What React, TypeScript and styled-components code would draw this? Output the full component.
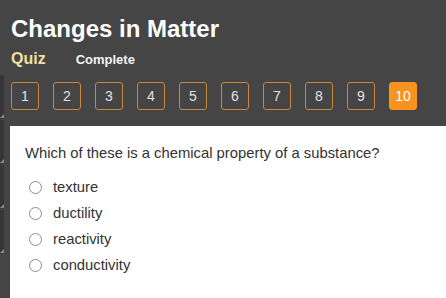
import React, { useState } from 'react';
import styled, { createGlobalStyle, css } from 'styled-components';

const GlobalStyle = createGlobalStyle`
  html, body {
    margin: 0;
    padding: 0;
    background: #454545;
    font-family: 'Liberation Sans', Arial, sans-serif;
  }
`;

const Page = styled.div`
  width: 446px;
  height: 298px;
  overflow: hidden;
  background: #454545;
  display: flex;
  flex-direction: column;
`;

const Header = styled.div`
  padding: 16px 0 0 11px;
`;

const Title = styled.h1`
  margin: 0;
  font-size: 24px;
  line-height: 26px;
  font-weight: bold;
  color: #ffffff;
`;

const SubRow = styled.div`
  display: flex;
  align-items: baseline;
  gap: 30px;
  margin-top: 8px;
`;

const Kind = styled.span`
  font-size: 16px;
  font-weight: bold;
  color: #f1dea5;
`;

const Status = styled.span`
  font-size: 13px;
  font-weight: bold;
  color: #f4f4f4;
`;

const Body = styled.div`
  flex: 1;
  display: flex;
  margin-top: 7px;
`;

const Rail = styled.div`
  width: 10px;
  flex-shrink: 0;
  display: flex;
  flex-direction: column;
  gap: 1px;
`;

const RailSegment = styled.div`
  position: relative;
  width: 4px;
  height: 44px;
  background: #363636;

  &::after {
    content: '';
    position: absolute;
    right: 0;
    bottom: 1px;
    border-left: 4px solid transparent;
    border-bottom: 4px solid #8a8a8a;
  }
`;

const Content = styled.div`
  flex: 1;
  display: flex;
  flex-direction: column;
`;

const Nav = styled.div`
  display: flex;
  gap: 14px;
  padding: 7px 0 16px 1px;
`;

const NumButton = styled.button<{ active?: boolean }>`
  width: 28px;
  height: 28px;
  box-sizing: border-box;
  padding: 0;
  border: 1px solid #c9883c;
  border-radius: 3px;
  background: transparent;
  color: #e2e2e2;
  font-family: 'Liberation Sans', Arial, sans-serif;
  font-size: 14px;
  cursor: pointer;

  ${props =>
    props.active &&
    css`
      background: #f7931e;
      border-color: #f7931e;
      color: #ffffff;
    `}
`;

const Panel = styled.div`
  flex: 1;
  background: #ffffff;
  padding: 18px 15px 0 15px;
`;

const Question = styled.p`
  margin: 0 0 12px 0;
  font-size: 14.8px;
  line-height: 18px;
  color: #333333;
`;

const Options = styled.div`
  display: flex;
  flex-direction: column;
`;

const Option = styled.label`
  display: flex;
  align-items: center;
  height: 26px;
  padding-left: 4px;
  font-size: 14.8px;
  color: #333333;
  cursor: pointer;
`;

const RadioCircle = styled.span<{ checked?: boolean }>`
  width: 13px;
  height: 13px;
  box-sizing: border-box;
  border: 1px solid #8c8c8c;
  border-radius: 50%;
  background: #ffffff;
  margin-right: 11px;
  flex-shrink: 0;

  ${props =>
    props.checked &&
    css`
      border: 4px solid #f7931e;
    `}
`;

const options = ['texture', 'ductility', 'reactivity', 'conductivity'];

const App: React.FC = () => {
  const [current, setCurrent] = useState(10);
  const [picked, setPicked] = useState<string | null>(null);

  return (
    <Page>
      <GlobalStyle />
      <Header>
        <Title>Changes in Matter</Title>
        <SubRow>
          <Kind>Quiz</Kind>
          <Status>Complete</Status>
        </SubRow>
      </Header>
      <Body>
        <Rail>
          {[0, 1, 2, 3].map(i => (
            <RailSegment key={i} />
          ))}
        </Rail>
        <Content>
          <Nav>
            {Array.from({ length: 10 }, (_, i) => i + 1).map(n => (
              <NumButton
                key={n}
                active={n === current}
                onClick={() => setCurrent(n)}
              >
                {n}
              </NumButton>
            ))}
          </Nav>
          <Panel>
            <Question>Which of these is a chemical property of a substance?</Question>
            <Options>
              {options.map(o => (
                <Option key={o} onClick={() => setPicked(o)}>
                  <RadioCircle checked={picked === o} />
                  {o}
                </Option>
              ))}
            </Options>
          </Panel>
        </Content>
      </Body>
    </Page>
  );
};

export default App;
